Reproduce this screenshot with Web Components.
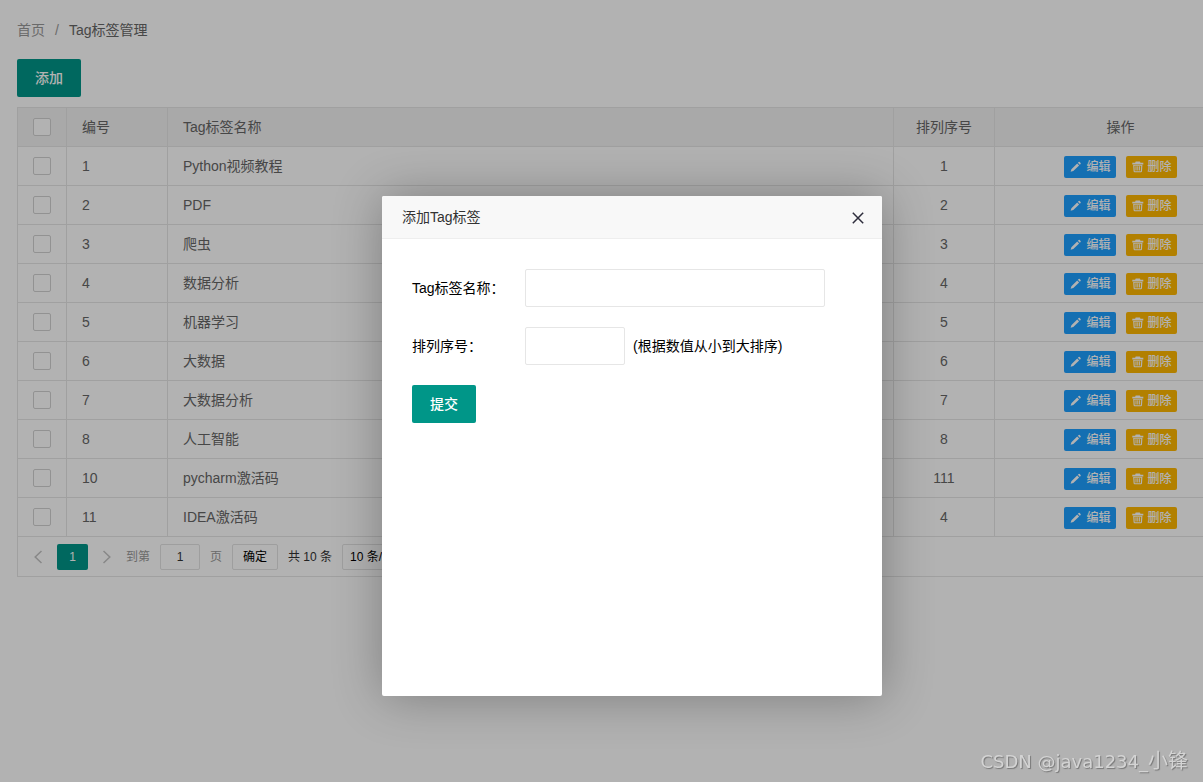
<!DOCTYPE html>
<html lang="zh-CN">
<head>
<meta charset="utf-8">
<title>Tag标签管理</title>
<style>
html, body { margin: 0; min-height: 100%; background: #fff; }
body {
  overflow: hidden;
  font: 14px/24px "Liberation Sans", "Noto Sans CJK SC", sans-serif;
  color: #666;
}
</style>
</head>
<body>
<tag-page>
  <bread-crumb slot="nav"></bread-crumb>
  <ui-button slot="nav">添加</ui-button>
  <tag-table></tag-table>
  <modal-dialog slot="overlay" heading="添加Tag标签"><tag-form></tag-form></modal-dialog>
</tag-page>
<water-mark>CSDN @java1234_<span>小锋</span></water-mark>

<script>
const define = (name, html, setup) => {
  const template = document.createElement('template');
  template.innerHTML = html;
  customElements.define(name, class extends HTMLElement {
    constructor() {
      super();
      this.attachShadow({ mode: 'open' }).append(template.content.cloneNode(true));
    }
    connectedCallback() { if (setup) setup(this, this.shadowRoot); }
  });
};

define('tag-page', `
<style>
:host { display: block; position: relative; box-sizing: border-box; min-width: 1264px; min-height: max(892px, 100vh); padding: 18px 17px; }
header { display: flex; flex-direction: column; align-items: flex-start; gap: 17px; margin-bottom: 10px; }
.shade { position: absolute; inset: 0; display: grid; place-items: center; background: rgba(0,0,0,.3); }
</style>
<header><slot name="nav"></slot></header>
<main><slot></slot></main>
<div class="shade"><slot name="overlay"></slot></div>`);

define('bread-crumb', `
<style>
:host { display: block; }
nav { display: flex; gap: 10px; }
a { color: #999; text-decoration: none; }
i { color: #999; font-style: normal; }
</style>
<nav aria-label="路径"><a href="#">首页</a><i>/</i><span>Tag标签管理</span></nav>`);

define('ui-button', `
<style>
:host { display: inline-block; }
button { display: block; height: 38px; padding: 0 18px; border: 0; border-radius: 2px; background: #009688; color: #fff; font: inherit; font-weight: 500; line-height: 38px; white-space: nowrap; }
</style>
<button type="button"><slot></slot></button>`);

define('row-action', `
<style>
:host { display: block; --tone: #1e9fff; }
:host([kind="delete"]) { --tone: #ffb800; }
button { display: flex; align-items: center; gap: 4px; height: 22px; padding: 0 5px 0 6px; border: 0; border-radius: 2px; background: var(--tone); color: #fff; font: inherit; font-size: 12px; font-weight: 500; line-height: 22px; white-space: nowrap; }
svg { display: none; width: 12px; height: 12px; fill: currentColor; }
:host([kind="edit"]) .pen, :host([kind="delete"]) .bin { display: block; }
</style>
<button type="button">
  <svg class="pen" viewBox="0 0 12 12"><path d="M.6 10.8l.8-2.6 5.8-5.7 1.9 1.9-5.8 5.7zM7.9 1.8l.8-.8q.5-.4 1 0l.9.9q.4.5 0 1l-.8.8z"/></svg>
  <svg class="bin" viewBox="0 0 12 12"><path fill-rule="evenodd" d="M3.3 1.8V1.3q0-.7.7-.7h3.6q.7 0 .7.7v.5h3v1.6H.3V1.8zM1.2 4h9.2l-.4 6.2q-.1 1-1.1 1H2.7q-1 0-1.1-1zM2.4 4.8l.3 5.4h6.2l.3-5.4zM3.5 5.2h1v4.4h-1zm1.8 0h1v4.4h-1zm1.8 0h1v4.4h-1z"/></svg>
  <slot></slot>
</button>`);

define('tag-table', `
<style>
:host { display: block; border: 1px solid #e6e6e6; }
table { width: 100%; table-layout: fixed; border-collapse: separate; border-spacing: 0; }
.c-check { width: 49px; } .c-id, .c-sort { width: 101px; } .c-ops { width: 251px; }
th, td { box-sizing: border-box; height: 39px; padding: 0 15px; border: solid #e6e6e6; border-width: 0 1px 1px 0; font-weight: 400; line-height: 28px; text-align: left; }
th { background: #f2f2f2; }
th:last-child, td:last-child { border-right: 0; }
th.mid, td.mid { text-align: center; }
input { display: block; appearance: none; box-sizing: border-box; width: 18px; height: 18px; margin: 0; border: 1px solid #d2d2d2; border-radius: 2px; background: #fff; }
.ops { display: flex; justify-content: center; gap: 10px; padding-top: 1px; }
</style>
<table>
  <colgroup><col class="c-check"><col class="c-id"><col><col class="c-sort"><col class="c-ops"></colgroup>
  <thead><tr><th><input type="checkbox" aria-label="全选"></th><th>编号</th><th>Tag标签名称</th><th class="mid">排列序号</th><th class="mid">操作</th></tr></thead>
  <tbody></tbody>
</table>
<page-bar></page-bar>`, (host, root) => {
  const rows = [
    [1, 'Python视频教程', 1], [2, 'PDF', 2], [3, '爬虫', 3], [4, '数据分析', 4], [5, '机器学习', 5],
    [6, '大数据', 6], [7, '大数据分析', 7], [8, '人工智能', 8], [10, 'pycharm激活码', 111], [11, 'IDEA激活码', 4]
  ];
  root.querySelector('tbody').innerHTML = rows.map(([id, name, sort]) => `
    <tr><td><input type="checkbox" aria-label="选择 ${id}"></td><td>${id}</td><td>${name}</td><td class="mid">${sort}</td>
    <td><div class="ops"><row-action kind="edit">编辑</row-action><row-action kind="delete">删除</row-action></div></td></tr>`).join('');
});

define('page-bar', `
<style>
:host { display: flex; align-items: center; gap: 3px; height: 39px; padding: 0 4px; font-size: 12px; color: #999; }
nav { display: flex; align-items: center; gap: 3px; }
button, input, select { box-sizing: border-box; height: 26px; border: 1px solid #e2e2e2; border-radius: 2px; background: #fff; font: inherit; color: #000; }
.arrow { display: grid; place-items: center; width: 32px; padding: 0; border: 0; color: #c2c2c2; }
.arrow svg { width: 8px; height: 14px; fill: none; stroke: currentColor; stroke-width: 1.5; }
.now { width: 31px; background: #009688; color: #fff; text-align: center; line-height: 26px; border-radius: 2px; }
.jump, label { display: flex; align-items: center; gap: 10px; }
input { width: 40px; padding: 0; text-align: center; color: #333; }
.ok { width: 46px; padding: 0; }
.total { color: #333; }
select { width: 90px; padding: 0 3px; }
</style>
<nav aria-label="分页">
  <button class="arrow" type="button" aria-label="上一页"><svg viewBox="0 0 8 14"><path d="M7.5 1L1.2 7l6.3 6"/></svg></button>
  <span class="now">1</span>
  <button class="arrow" type="button" aria-label="下一页"><svg viewBox="0 0 8 14"><path d="M.5 1l6.3 6L.5 13"/></svg></button>
</nav>
<div class="jump">
  <label><span>到第</span><input type="text" value="1"><span>页</span></label>
  <button class="ok" type="button">确定</button>
  <span class="total">共 10 条</span>
  <select aria-label="每页条数"><option>10 条/页</option></select>
</div>`);

define('modal-dialog', `
<style>
:host { display: block; width: 500px; height: 500px; border-radius: 2px; background: #fff; box-shadow: 1px 1px 50px rgba(0,0,0,.3); }
header { display: flex; align-items: center; justify-content: space-between; height: 42px; padding: 0 16px 0 20px; border-bottom: 1px solid #eee; border-radius: 2px 2px 0 0; background: #f8f8f8; color: #333; }
h2 { margin: 0; font: inherit; }
button { display: block; width: 16px; height: 16px; padding: 0; border: 0; background: none; }
svg { display: block; width: 16px; height: 16px; stroke: #2e2d3c; stroke-width: 1.5; }
section { padding: 30px; color: #000; }
</style>
<header><h2></h2><button type="button" aria-label="关闭"><svg viewBox="0 0 16 16"><path d="M2.8 3.8l10.4 10.4M13.2 3.8L2.8 14.2"/></svg></button></header>
<section><slot></slot></section>`, (host, root) => {
  root.querySelector('h2').textContent = host.getAttribute('heading');
});

define('tag-form', `
<style>
:host { display: block; }
form { display: grid; grid-template-columns: 105px 1fr; gap: 20px 8px; align-items: center; }
input { box-sizing: border-box; width: 300px; height: 38px; padding: 0 10px; border: 1px solid #e6e6e6; border-radius: 2px; background: #fff; font: inherit; }
.field { display: flex; align-items: center; gap: 8px; }
.short { width: 100px; }
</style>
<form>
  <label for="name">Tag标签名称：</label><div class="field"><input id="name" type="text"></div>
  <label for="sort">排列序号：</label><div class="field"><input id="sort" class="short" type="text"><span>(根据数值从小到大排序)</span></div>
  <ui-button>提交</ui-button>
</form>`);

define('water-mark', `
<style>
:host { position: fixed; right: 15px; bottom: 6px; font: 18px/28px "DejaVu Sans", "Noto Sans CJK SC", sans-serif; color: #d4d4d4; text-shadow: 1px 1px 1px #777; white-space: nowrap; }
::slotted(span) { font-size: 20px; }
</style>
<slot></slot>`);
</script>
</body>
</html>
